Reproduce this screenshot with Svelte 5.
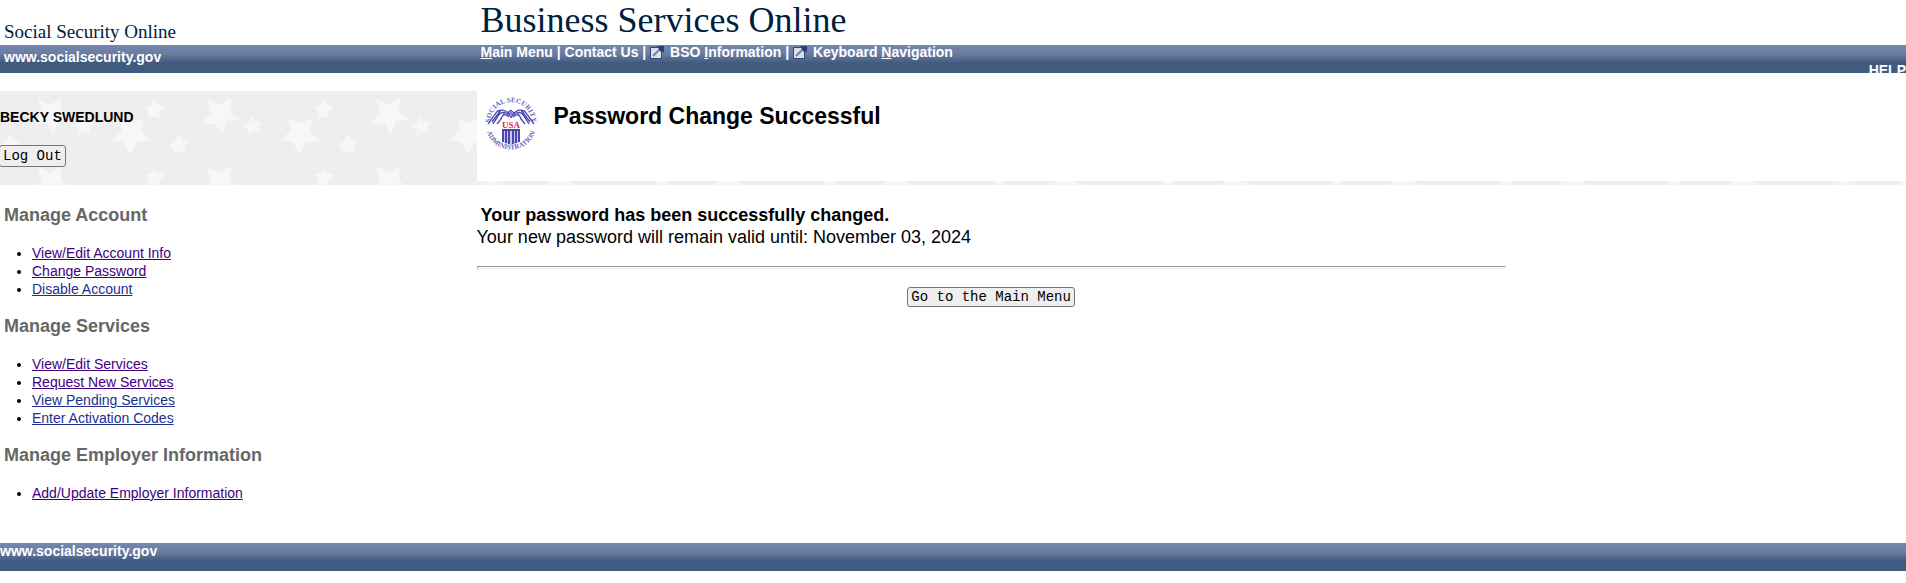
<script>
  const sections = [
    {
      title: 'Manage Account',
      links: [
        { label: 'View/Edit Account Info', visited: true },
        { label: 'Change Password', visited: true },
        { label: 'Disable Account', visited: false }
      ]
    },
    {
      title: 'Manage Services',
      links: [
        { label: 'View/Edit Services', visited: true },
        { label: 'Request New Services', visited: true },
        { label: 'View Pending Services', visited: false },
        { label: 'Enter Activation Codes', visited: false }
      ]
    },
    {
      title: 'Manage Employer Information',
      links: [{ label: 'Add/Update Employer Information', visited: true }]
    }
  ];
</script>

{#snippet external()}
  <svg class="external" viewBox="0 0 14 13" aria-hidden="true">
    <rect x="0" y="1" width="12" height="12" fill="#34467c" />
    <rect x="1" y="2" width="10" height="10" fill="#dde0e8" />
    <path d="M7 0h7v7l-2-2-1 1-3-3 1-1z" fill="#2c3e78" />
    <path d="M3 10l6-6" stroke="#7482a6" stroke-width="2" fill="none" />
  </svg>
{/snippet}

<div class="page">
  <header class="brand columns">
    <div class="agency">Social Security Online</div>
    <div class="product">Business Services Online</div>
  </header>

  <nav class="bar columns" aria-label="Main">
    <a class="site" href="#home">www.socialsecurity.gov</a>
    <div class="menu">
      <div class="menu-links">
        <a href="#main"><u>M</u>ain Menu</a> | <a href="#contact">Contact Us</a> |
        {@render external()}
        <a href="#info">BSO <u>I</u>nformation</a> |
        {@render external()}
        <a href="#keys">Keyboard <u>N</u>avigation</a>
      </div>
      <a class="help" href="#help">HELP</a>
    </div>
  </nav>

  <div class="banner columns">
    <div class="user">
      <strong>BECKY SWEDLUND</strong>
      <button type="button">Log Out</button>
    </div>
    <div class="title">
      <svg class="seal" viewBox="0 0 54 54" role="img" aria-label="Social Security Administration">
        <defs>
          <path id="arc-top" d="M6.6 30A20.8 20.8 0 1 1 47.4 30" />
          <path id="arc-bottom" d="M1.5 27A25.5 25.5 0 0 0 52.5 27" />
        </defs>
        <g fill="#6661bd" font-family="Liberation Serif, serif" font-size="7" font-weight="bold" text-anchor="middle">
          <text><textPath href="#arc-top" startOffset="50%">SOCIAL SECURITY</textPath></text>
          <text><textPath href="#arc-bottom" startOffset="50%">ADMINISTRATION</textPath></text>
        </g>
        <g fill="none" stroke="#4a46b4" stroke-width="1.3">
          <path d="M25 17C21 12 14 12 12 16L4 27M25 18C20 14 16 15 14 19L9 27M25 20C21 16 18 18 17 22L13 27M17 13L8 25M21 15L16 23" />
          <path d="M29 17C33 12 40 12 42 16L50 27M29 18C34 14 38 15 40 19L45 27M29 20C33 16 36 18 37 22L41 27M37 13L46 25M33 15L38 23" />
          <path d="M24 15l3-2 3 3-3 5z" fill="#8f8bd2" stroke-width="1" />
        </g>
        <g fill="#4a46b4">
          <path d="M18 33h18v11q-2 3-9 4q-7-1-9-4z" fill="#c9c7ec" />
          <path d="M18 32h2v13h-2zM21 32h2v14h-2zM24 32h2v15h-2zM28 32h2v15h-2zM31 32h2v14h-2zM34 32h2v13h-2zM18 32h18v2h-18z" />
        </g>
        <text x="27" y="31" fill="#dd2452" stroke="#fff" stroke-width="2" paint-order="stroke" font-family="Liberation Serif, serif" font-size="9" font-weight="bold" text-anchor="middle">USA</text>
      </svg>
      <h1>Password Change Successful</h1>
    </div>
  </div>

  <div class="body columns">
    <aside>
      {#each sections as section}
        <section>
          <h2>{section.title}</h2>
          <ul>
            {#each section.links as link}
              <li><a href="#item" class:visited={link.visited}>{link.label}</a></li>
            {/each}
          </ul>
        </section>
      {/each}
    </aside>
    <main>
      <strong>Your password has been successfully changed.</strong>
      <p>Your new password will remain valid until: November 03, 2024</p>
      <hr />
      <div class="actions"><button type="button">Go to the Main Menu</button></div>
    </main>
  </div>

  <footer class="bar"><a href="#home">www.socialsecurity.gov</a></footer>
</div>

<style>
  :global(body) {
    margin: 0;
    background: #fff;
  }

  .page {
    font-family: 'Liberation Sans', Arial, sans-serif;
    font-size: 14px;
    color: #000;
    overflow-x: hidden;
  }

  .columns {
    display: grid;
    grid-template-columns: 25% minmax(0, 1fr);
  }

  .brand {
    height: 45px;
    color: #002040;
    font-family: Georgia, 'Liberation Serif', serif;
    white-space: nowrap;
  }

  .agency {
    padding: 20px 0 0 4px;
    font-size: 19px;
    line-height: 24px;
  }

  .product {
    padding-left: 4px;
    font-size: 36px;
    line-height: 40px;
  }

  .bar {
    height: 28px;
    overflow: hidden;
    background: linear-gradient(#7587b3 0, #6a7c9f 9px, #405b80 18px);
    color: #fff;
    font-size: 14px;
    font-weight: bold;
    line-height: 16px;
  }

  .bar a {
    color: #fff;
    text-decoration: none;
  }

  .site {
    padding: 4px 0 0 4px;
  }

  .menu {
    display: flex;
    flex-direction: column;
    gap: 4px;
    padding-left: 4px;
    line-height: 14px;
  }

  .help {
    align-self: flex-end;
  }

  .external {
    width: 14px;
    height: 13px;
    margin-right: 2px;
    vertical-align: -2px;
  }

  .banner {
    margin-top: 18px;
    padding-bottom: 4px;
    background: #eee
      url("data:image/svg+xml,%3Csvg xmlns='http://www.w3.org/2000/svg' width='169' height='68'%3E%3Cpath fill='%23f7f7f7' d='M38 8L50 14L62 7L61 22L71 28L58 31L53 44L47 33L33 32L42 22zM83 25L85 30L93 31L89 36L91 42L84 41L78 45L79 38L74 34L80 31zM120 27L129 32L143 28L141 40L150 50L137 51L130 64L124 51L112 49L122 39zM154 8L157 13L165 16L159 21L160 28L154 25L148 28L149 21L145 16L152 14zM9 44L13 49L20 51L15 55L17 62L10 60L4 63L5 57L0 54L7 50z'/%3E%3C/svg%3E");
  }

  .user {
    display: flex;
    flex-direction: column;
    align-items: flex-start;
    gap: 20px;
    padding-top: 18px;
    line-height: 16px;
  }

  .title {
    display: flex;
    align-items: flex-start;
    gap: 16px;
    min-height: 90px;
    box-sizing: border-box;
    padding: 6px 0 0 7px;
    background: #fff;
  }

  .seal {
    width: 54px;
    height: 54px;
    flex: none;
  }

  h1 {
    margin: 5px 0 0;
    font-size: 23px;
    line-height: 28px;
  }

  button {
    box-sizing: border-box;
    border: 1px solid #767676;
    border-radius: 3px;
    background: #efefef;
    color: #000;
    font-family: 'Liberation Mono', 'Courier New', monospace;
    font-size: 14px;
    line-height: 18px;
    padding: 0 3px;
  }

  .user button {
    height: 22px;
    margin-left: -1px;
  }

  aside {
    padding: 20px 0 23px 4px;
  }

  section {
    margin-bottom: 18px;
  }

  h2 {
    margin: 0 0 19px;
    color: #666;
    font-size: 18px;
    line-height: 20px;
  }

  ul {
    margin: 0;
    padding-left: 28px;
    line-height: 18px;
  }

  li a {
    color: #203090;
  }

  li a.visited {
    color: #400080;
  }

  main {
    width: 72%;
    padding-top: 19px;
    font-size: 18px;
    line-height: 22px;
  }

  main strong {
    display: block;
    padding-left: 4px;
  }

  p {
    margin: 0;
  }

  hr {
    box-sizing: border-box;
    height: 3px;
    margin: 18px 0;
    border: 1px solid;
    border-color: #9a9a9a #eee #eee #9a9a9a;
  }

  .actions {
    display: flex;
    justify-content: center;
  }
</style>
